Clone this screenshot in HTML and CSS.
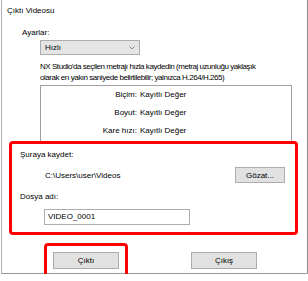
FILE: index.html
```html
<!DOCTYPE html>
<html lang="tr">
<head>
    <meta charset="UTF-8">
    <title>Çıktı Videosu</title>
    <link rel="stylesheet" href="styles.css">
</head>
<body>
    <div class="dialog">
        <div class="title">Çıktı Videosu</div>

        <div class="settings-label">Ayarlar:</div>
        <div class="indent">
            <div class="select">
                <span>Hızlı</span>
                <svg class="chevron" width="6" height="4" viewBox="0 0 6 4"><path d="M0.5 0.5 L3 3 L5.5 0.5" fill="none" stroke="#8a8a8a" stroke-width="1"/></svg>
            </div>
            <p class="desc">NX Studio'da seçilen metrajı hızla kaydedin (metraj uzunluğu yaklaşık<br>olarak en yakın saniyede belirtilebilir; yalnızca H.264/H.265)</p>
            <div class="info-box">
                <div class="info-row"><span class="info-key">Biçim:</span><span class="info-val">Kayıtlı Değer</span></div>
                <div class="info-row"><span class="info-key">Boyut:</span><span class="info-val">Kayıtlı Değer</span></div>
                <div class="info-row"><span class="info-key">Kare hızı:</span><span class="info-val">Kayıtlı Değer</span></div>
            </div>
        </div>

        <div class="highlight save-box">
            <div class="field-label">Şuraya kaydet:</div>
            <div class="path-row">
                <span class="path">C:\Users\user\Videos</span>
                <button class="btn browse">Gözat...</button>
            </div>
            <div class="field-label name-label">Dosya adı:</div>
            <div class="name-input">VIDEO_0001</div>
        </div>

        <div class="button-row">
            <div class="highlight out-wrap">
                <button class="btn action">Çıktı</button>
            </div>
            <button class="btn action exit">Çıkış</button>
        </div>
    </div>
</body>
</html>
```

FILE: styles.css
```css
body {
    margin: 0;
    background-color: #ffffff;
    font-family: "Liberation Sans", Arial, sans-serif;
    font-size: 8px;
    color: #000;
}
.dialog {
    width: 305px;
    height: 273px;
    margin-left: 1px;
    border-right: 1px solid #8c8c8c;
    border-bottom: 1px solid #9a9a9a;
    border-left: 1px solid #b0b0b0;
    background-color: #ffffff;
}
.title {
    height: 22px;
    line-height: 22px;
    padding-left: 5px;
}
.settings-label {
    height: 14px;
    line-height: 14px;
    margin-top: 4px;
    padding-left: 20px;
}
.indent {
    margin-left: 38px;
}
.select {
    width: 90px;
    height: 13px;
    line-height: 13px;
    border: 1px solid #adadad;
    background-color: #e5e5e5;
    display: flex;
    align-items: center;
    justify-content: space-between;
    padding: 0 4px;
}
.chevron {
    display: block;
}
.desc {
    margin: 6px 0 0 0;
    line-height: 11px;
    white-space: nowrap;
    letter-spacing: -0.45px;
}
.info-box {
    margin-top: 2px;
    width: 252px;
    height: 56px;
    border: 1px solid #a0a0a0;
    border-bottom: none;
    box-sizing: border-box;
}
.info-row {
    display: flex;
    height: 18px;
    line-height: 18px;
}
.info-key {
    width: 96px;
    text-align: right;
}
.info-val {
    margin-left: 3px;
}
.highlight {
    border: 3px solid #ff0000;
    border-radius: 4px;
}
.save-box {
    margin-left: 7px;
    width: 289px;
    height: 94px;
    box-sizing: border-box;
    padding: 4px 0 0 8px;
}
.field-label {
    height: 14px;
    line-height: 14px;
}
.path-row {
    margin-top: 4px;
    height: 18px;
    display: flex;
    align-items: center;
    justify-content: space-between;
    padding-right: 10px;
}
.path {
    margin-left: 25px;
}
.btn {
    font-family: inherit;
    font-size: inherit;
    color: #000;
    background-color: #e1e1e1;
    border: 1px solid #adadad;
    padding: 0;
    margin: 0;
}
.browse {
    width: 50px;
    height: 16px;
}
.name-label {
    margin-top: 6px;
}
.name-input {
    margin-top: 5px;
    margin-left: 24px;
    width: 146px;
    height: 16px;
    box-sizing: border-box;
    border: 1px solid #adadad;
    line-height: 14px;
    padding-left: 3px;
}
.button-row {
    display: flex;
    align-items: flex-start;
    margin-top: 8px;
    margin-left: 42px;
}
.out-wrap {
    padding: 6px;
}
.action {
    width: 66px;
    height: 17px;
    display: block;
}
.exit {
    margin-top: 9px;
    margin-left: 63px;
}
```
